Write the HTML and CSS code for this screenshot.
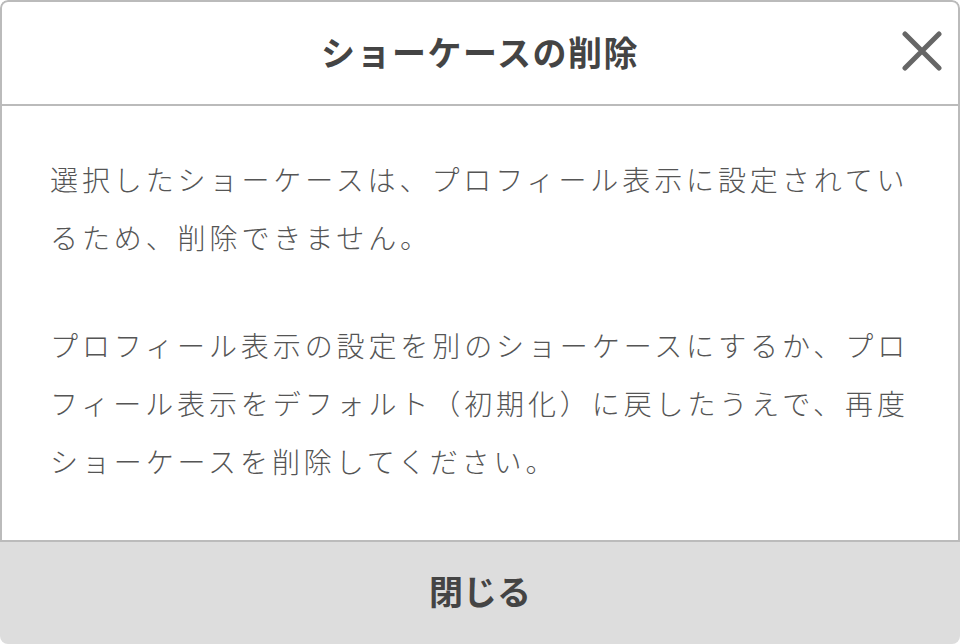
FILE: index.html
```html
<!DOCTYPE html>
<html lang="ja">
<head>
    <meta charset="UTF-8">
    <meta name="viewport" content="width=device-width, initial-scale=1.0">
    <title>ショーケースの削除</title>
    <link rel="stylesheet" href="styles.css">
</head>
<body>
    <div class="modal">
        <div class="modal-panel">
            <div class="modal-header">
                <h1 class="modal-title">ショーケースの削除</h1>
                <button class="modal-close" aria-label="閉じる">
                    <svg width="40" height="40" viewBox="0 0 40 40">
                        <path d="M3 3 L37 37 M37 3 L3 37" stroke="#666" stroke-width="5" stroke-linecap="round" fill="none"/>
                    </svg>
                </button>
            </div>
            <div class="modal-body">
                <p>選択したショーケースは、プロフィール表示に設定されているため、削除できません。</p>
                <p>プロフィール表示の設定を別のショーケースにするか、プロフィール表示をデフォルト（初期化）に戻したうえで、再度ショーケースを削除してください。</p>
            </div>
        </div>
        <button class="modal-footer">閉じる</button>
    </div>
</body>
</html>
```

FILE: styles.css
```css
html, body {
    margin: 0;
    height: 100%;
}
body {
    font-family: "Noto Sans CJK JP", "Noto Sans", sans-serif;
    color: #555;
    background: #fff;
}
.modal {
    height: 100%;
    display: flex;
    flex-direction: column;
    border-radius: 8px;
    overflow: hidden;
}
.modal-panel {
    flex: 1;
    display: flex;
    flex-direction: column;
    border: 2px solid #bbb;
    border-radius: 8px 8px 0 0;
    background: #fff;
}
.modal-header {
    height: 104px;
    box-sizing: border-box;
    padding-bottom: 4px;
    display: flex;
    align-items: center;
    justify-content: center;
    position: relative;
    border-bottom: 2px solid #bbb;
}
.modal-title {
    margin: 0;
    font-size: 34px;
    font-weight: 700;
    letter-spacing: 1.5px;
    color: #444;
}
.modal-close {
    position: absolute;
    right: 16px;
    top: 29px;
    width: 40px;
    height: 40px;
    padding: 0;
    border: none;
    background: none;
    cursor: pointer;
}
.modal-close svg {
    display: block;
}
.modal-body {
    flex: 1;
    padding: 44px 44px 0 48px;
}
.modal-body p {
    margin: 0 0 50px;
    font-size: 28px;
    font-weight: 300;
    line-height: 58px;
    letter-spacing: 3.9px;
}
.modal-footer {
    height: 104px;
    padding: 0 0 6px;
    border: none;
    background: #ddd;
    font-family: inherit;
    font-size: 34px;
    font-weight: 700;
    color: #444;
    cursor: pointer;
}
```
